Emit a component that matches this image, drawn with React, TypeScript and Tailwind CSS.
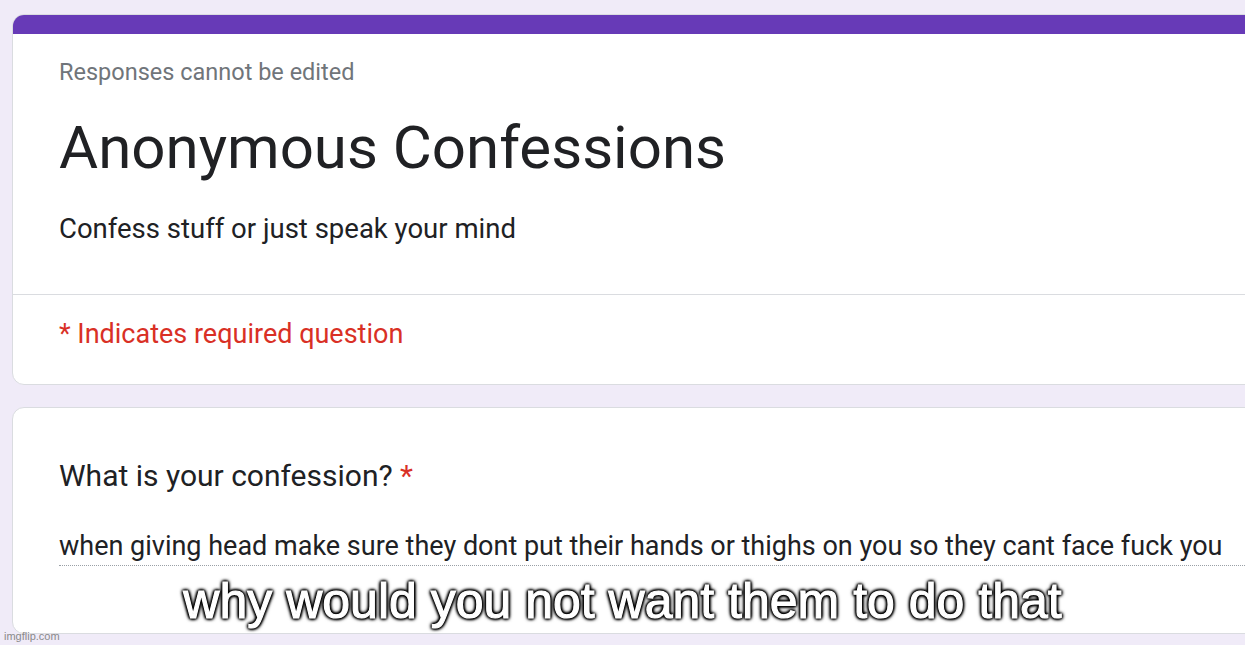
import React from 'react';

const roboto = { fontFamily: 'Roboto, "Liberation Sans", sans-serif' };

export default function App() {
  return (
    <div className="relative h-[645px] w-[1245px] overflow-hidden bg-[#f0ebf8]" style={roboto}>
      <div className="flex w-[1270px] flex-col gap-[22px] pl-[12px] pt-[14px]">
        {/* header card */}
        <div className="overflow-hidden rounded-[12px] border border-[#dadce0] bg-white">
          <div className="h-[19px] bg-[#673ab7]" />
          <div className="px-[46px] pt-[23px] pb-[48px]">
            <p className="text-[23.5px] leading-[30px] text-[#70757a]">Responses cannot be edited</p>
            <h1 className="mt-[25px] text-[60px] leading-[72px] text-[#202124]">Anonymous Confessions</h1>
            <p className="mt-[28px] text-[27.5px] leading-[34px] text-[#202124]">Confess stuff or just speak your mind</p>
          </div>
          <div className="border-t border-[#dadce0] px-[46px] pt-[22px] pb-[33px]">
            <p className="text-[27px] leading-[34px] text-[#d93025]">* Indicates required question</p>
          </div>
        </div>

        {/* question card */}
        <div className="h-[227px] rounded-[12px] border border-[#dadce0] bg-white pl-[46px] pt-[49px]">
          <p className="text-[30px] leading-[38px] text-[#202124]">
            What is your confession? <span className="text-[#d93025]">*</span>
          </p>
          <div className="mt-[34px] border-b border-dotted border-[#9aa0a6] pb-[2px]">
            <p className="text-[27px] leading-[34px] text-[#202124]">
              when giving head make sure they dont put their hands or thighs on you so they cant face fuck you
            </p>
          </div>
        </div>
      </div>

      {/* meme caption */}
      <div
        className="absolute left-0 right-0 top-[572px] text-center text-[50px] leading-[58px] text-white"
        style={{
          fontFamily: '"Liberation Sans", Arial, sans-serif',
          WebkitTextStroke: '1.1px #fff',
          textShadow:
            '0 0 2px #000, 0 0 3px #000, 0 0 4px #000, 0 0 5px #000, 1px 1px 3px #000, -1px -1px 3px #000, 1px -1px 3px #000, -1px 1px 3px #000',
        }}
      >
        why would you not want them to do that
      </div>

      <div
        className="absolute bottom-[3px] left-[4px] text-[11px] leading-[12px] text-[#8a8a8a]"
        style={{ fontFamily: '"Liberation Sans", Arial, sans-serif' }}
      >
        imgflip.com
      </div>
    </div>
  );
}
